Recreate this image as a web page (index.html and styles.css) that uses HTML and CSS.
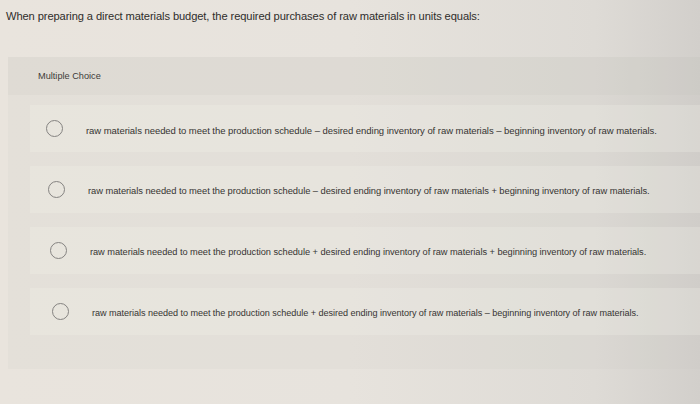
FILE: index.html
```html
<!DOCTYPE html>
<html>
<head>
<meta charset="utf-8">
<link rel="stylesheet" href="styles.css">
</head>
<body>
<div class="page">
  <p class="question">When preparing a direct materials budget, the required purchases of raw materials in units equals:</p>
  <section class="panel">
    <div class="panel-head">Multiple Choice</div>
    <div class="options">
      <div class="option o1"><span class="radio"></span><span class="label">raw materials needed to meet the production schedule – desired ending inventory of raw materials – beginning inventory of raw materials.</span></div>
      <div class="option o2"><span class="radio"></span><span class="label">raw materials needed to meet the production schedule – desired ending inventory of raw materials + beginning inventory of raw materials.</span></div>
      <div class="option o3"><span class="radio"></span><span class="label">raw materials needed to meet the production schedule + desired ending inventory of raw materials + beginning inventory of raw materials.</span></div>
      <div class="option o4"><span class="radio"></span><span class="label">raw materials needed to meet the production schedule + desired ending inventory of raw materials – beginning inventory of raw materials.</span></div>
    </div>
  </section>
</div>
</body>
</html>
```

FILE: styles.css
```css
html, body {
  margin: 0;
  padding: 0;
}
body {
  width: 700px;
  height: 404px;
  overflow: hidden;
  background: linear-gradient(90deg, #e9e4dd 0%, #e7e3dd 50%, #dedbd6 85%, #d2cfcb 100%);
  font-family: "Liberation Sans", Arial, sans-serif;
  color: #3a3836;
}
.page {
  display: flex;
  flex-direction: column;
}
.question {
  margin: 0;
  padding: 10px 0 0 6px;
  height: 57px;
  box-sizing: border-box;
  font-size: 11.15px;
  letter-spacing: -0.1px;
  color: #2f2d2b;
}
.panel {
  margin-left: 8px;
  background: rgba(200, 195, 188, 0.12);
  height: 312px;
  display: flex;
  flex-direction: column;
}
.panel-head {
  height: 38px;
  padding: 14px 0 0 30px;
  box-sizing: border-box;
  font-size: 9.2px;
  color: #3d3b39;
  background: rgba(190, 186, 180, 0.12);
}
.options {
  display: flex;
  flex-direction: column;
  gap: 14px;
  padding: 10px 0 0 22px;
}
.option {
  height: 47px;
  display: flex;
  align-items: center;
  background: rgba(245, 242, 237, 0.25);
}
.radio {
  width: 15px;
  height: 15px;
  border: 1.3px solid #858381;
  border-radius: 50%;
  margin-left: 16px;
  flex: none;
}
.label {
  margin-left: 23px;
  font-size: 9.4px;
  letter-spacing: -0.05px;
  color: #363432;
  white-space: nowrap;
  padding-top: 3px;
}
.o1 .label { font-size: 9.5px; }
.o2 { padding-left: 2px; }
.o2 .label { font-size: 9.35px; }
.o3 { padding-left: 4px; }
.o3 .label { font-size: 9.25px; }
.o4 { padding-left: 6px; }
.o4 .label { font-size: 9.1px; }
```
